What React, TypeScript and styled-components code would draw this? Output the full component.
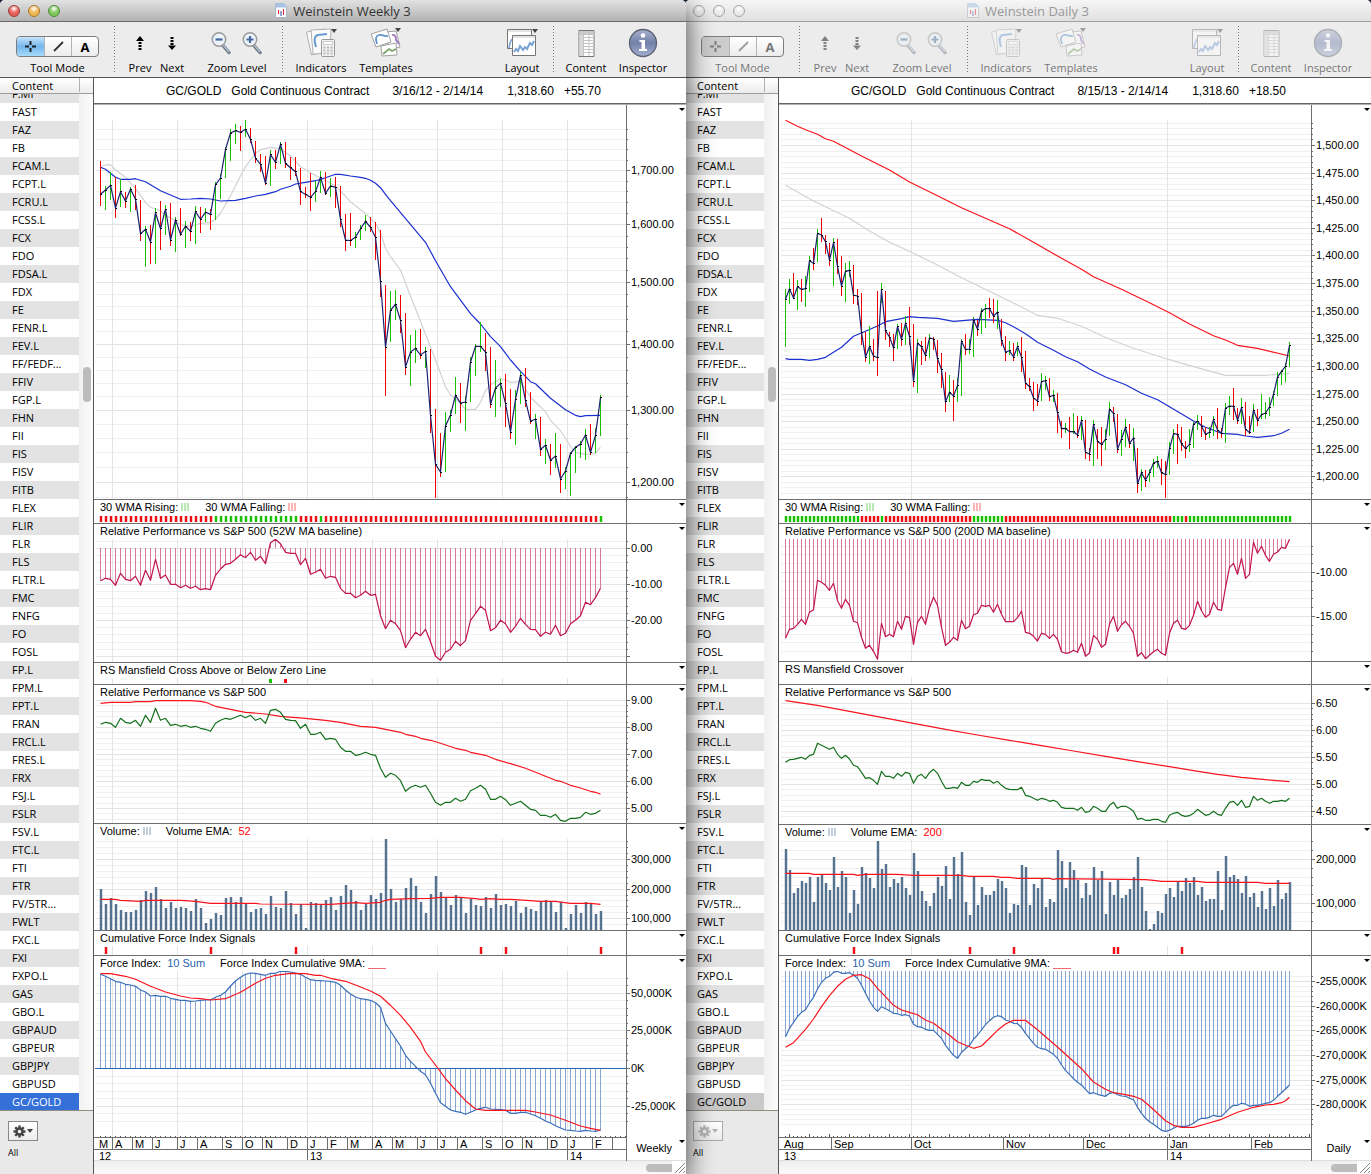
import React from 'react';
import styled, { createGlobalStyle, css } from 'styled-components';

/* ---------- data ---------- */

type Bar = [high: number, low: number, close: number, up: 0 | 1];
type Knot = [index: number, y: number];

const SYMBOLS = `F.MI FAST FAZ FB FCAM.L FCPT.L FCRU.L FCSS.L FCX FDO FDSA.L FDX FE FENR.L FEV.L FF/FEDF... FFIV FGP.L FHN FII FIS FISV FITB FLEX FLIR FLR FLS FLTR.L FMC FNFG FO FOSL FP.L FPM.L FPT.L FRAN FRCL.L FRES.L FRX FSJ.L FSLR FSV.L FTC.L FTI FTR FV/5TR... FWLT FXC.L FXI FXPO.L GAS GBO.L GBPAUD GBPEUR GBPJPY GBPUSD GC/GOLD`.split(' ');

/* Chart samples are stored in thirds of a pixel; each series names the lift that brings it to the top of its plot. */
const WEEKLY_BARS: Bar[] = [
  [183,318,283,0],[258,330,270,1],[216,300,256,1],[232,353,324,0],[238,321,275,1],[277,324,303,0],[262,336,268,1],[255,330,298,0],
  [300,423,401,0],[378,501,388,1],[375,492,426,0],[323,492,338,1],[303,450,386,0],[315,405,327,1],[309,438,420,0],[351,456,360,1],
  [324,407,403,0],[363,444,379,1],[366,423,394,0],[318,432,335,1],[321,399,358,0],[324,366,337,1],[327,390,343,0],[246,360,254,1],
  [222,297,234,1],[142,234,148,1],[86,183,99,1],[71,132,92,1],[78,153,97,0],[60,111,88,1],[84,129,118,0],[123,189,175,0],
  [162,216,192,0],[168,255,250,0],[150,258,164,1],[150,207,187,0],[126,192,133,1],[126,204,190,0],[170,240,203,0],[170,228,215,0],
  [204,315,275,0],[261,294,283,0],[219,333,292,0],[243,306,275,1],[213,279,232,1],[216,285,280,0],[234,291,258,1],[231,324,262,0],
  [258,381,358,0],[342,453,420,0],[339,438,422,0],[396,444,411,1],[375,420,386,1],[345,393,364,1],[350,396,382,0],[366,480,412,0],
  [390,591,545,0],[555,888,742,0],[573,726,631,1],[570,660,613,1],[585,699,661,0],[639,825,801,0],[705,858,756,1],[690,789,745,1],
  [687,777,765,0],[741,804,754,1],[747,999,946,0],[927,1194,1093,0],[999,1131,1116,0],[936,1116,978,1],[930,996,945,1],[831,942,886,1],
  [849,969,909,0],[888,993,906,1],[771,906,786,1],[732,828,739,1],[666,756,739,1],[699,813,756,0],[741,924,913,0],[780,951,864,1],
  [837,921,850,1],[822,981,910,0],[867,1017,996,0],[870,1035,898,1],[816,912,826,1],[804,921,901,0],[876,972,964,0],[942,1017,957,1],
  [951,1068,1048,0],[1017,1092,1036,1],[1032,1125,1081,0],[999,1104,1068,1],[1032,1179,1137,0],[1101,1167,1113,1],[1056,1188,1060,1],
  [1038,1119,1042,1],[1023,1074,1032,1],[987,1080,1005,1],[972,1065,1057,0],[984,1059,1006,1],[885,1008,892,1],
];
const WEEKLY_BLUE: Knot[] = [[0,202],[1,208],[3,232],[4,238],[6,238],[7,236],[9,245],[12,272],[16,298],[18,297],[20,295],[22,297],[24,303],[27,301],[29,295],[31,288],[33,283],[35,275],[36,268],[38,259],[39,252],[41,247],[43,242],[45,233],[47,223],[48,223],[50,228],[52,232],[53,235],[54,241],[55,250],[56,263],[57,283],[58,302],[65,427],[67,482],[70,560],[74,641],[76,672],[78,710],[80,740],[82,780],[84,814],[86,845],[87,851],[90,895],[93,929],[95,946],[96,950],[97,947],[100,946]];
const WEEKLY_GREY: Knot[] = [[0,199],[1,195],[2,194],[3,210],[5,232],[7,266],[9,307],[10,322],[12,333],[13,345],[15,362],[16,374],[18,380],[20,370],[22,368],[23,357],[24,340],[26,287],[28,228],[29,200],[31,160],[32,149],[34,142],[36,146],[38,168],[40,200],[42,218],[44,234],[46,250],[47,258],[48,273],[50,305],[52,329],[53,340],[55,370],[56,398],[57,445],[58,470],[60,510],[62,588],[65,702],[67,780],[68,820],[69,860],[70,885],[72,910],[73,928],[75,928],[76,907],[77,872],[78,855],[80,835],[82,847],[84,844],[85,867],[86,892],[89,935],[90,961],[92,992],[94,1039],[95,1057],[97,1064],[99,1060],[100,1042]];
const WEEKLY_MANSFIELD = [257,250,253,271,235,253,257,244,271,226,256,193,250,240,268,268,278,271,280,274,284,281,284,241,222,208,205,193,179,188,172,196,184,206,143,133,146,172,175,175,209,190,238,232,223,250,244,247,280,295,295,308,301,289,301,298,362,401,376,386,407,458,433,412,422,403,440,484,496,472,463,439,452,437,376,356,334,346,407,398,376,386,412,394,370,388,403,404,424,412,418,391,422,415,386,376,362,322,329,308,280];
const WEEKLY_RS_MA: Knot[] = [[0,55],[2,52],[6,52],[7,50],[10,50],[11,47],[18,47],[20,49],[21,52],[23,64],[26,73],[29,82],[33,87],[36,94],[41,100],[45,106],[48,112],[52,124],[55,127],[58,136],[60,142],[61,148],[63,154],[64,160],[66,166],[68,175],[71,190],[73,196],[74,202],[77,211],[79,223],[82,236],[85,250],[91,286],[92,289],[94,301],[96,309],[98,319],[99,322],[100,328]];
const WEEKLY_RS = [118,112,115,127,100,112,115,106,124,91,112,70,106,100,121,118,124,121,127,124,130,133,139,115,106,100,103,97,91,98,91,106,100,115,76,73,82,103,106,107,130,118,148,148,142,163,160,163,187,199,199,211,208,202,208,211,250,277,265,271,287,319,307,301,307,301,325,352,361,352,352,340,349,343,317,310,301,313,343,343,334,344,361,355,349,361,373,376,391,391,397,388,406,409,400,400,397,382,388,385,376];
const WEEKLY_VOLUME = [613,656,640,656,676,680,680,674,646,619,623,607,643,670,650,670,667,668,677,643,670,713,701,683,689,640,637,652,637,655,680,673,670,686,632,665,668,619,655,686,656,730,652,655,658,646,637,676,634,601,616,647,676,658,631,643,625,463,613,652,643,610,580,604,652,683,628,574,622,640,661,631,640,683,643,661,664,637,670,628,659,656,664,647,685,667,673,677,652,646,652,680,652,730,688,661,685,650,658,688,677];
const WEEKLY_VOLUME_EMA: Knot[] = [[0,643],[3,643],[4,646],[8,649],[9,646],[16,646],[19,649],[22,655],[31,655],[32,657],[46,658],[51,653],[53,655],[56,652],[57,646],[58,643],[62,641],[66,640],[68,637],[72,637],[75,641],[76,643],[78,641],[80,643],[82,643],[86,647],[88,649],[91,649],[94,655],[98,655],[100,658]];
const WEEKLY_FORCE = [73,79,86,94,97,103,105,109,120,126,138,136,139,139,145,148,151,151,154,153,151,150,149,142,136,126,108,93,82,73,69,70,73,76,70,70,64,64,66,69,73,82,89,91,92,93,94,97,106,120,132,141,146,148,151,158,172,220,243,266,288,316,334,349,364,374,400,430,458,469,480,484,487,493,487,480,475,472,477,478,479,481,490,490,487,487,492,497,505,513,519,527,534,540,541,543,544,541,543,544,540];
const WEEKLY_FORCE_MA: Knot[] = [[0,71],[2,71],[5,79],[7,88],[10,109],[13,126],[16,138],[18,144],[20,146],[22,150],[25,146],[28,127],[31,100],[33,85],[35,76],[38,70],[41,71],[43,76],[44,76],[46,85],[49,94],[51,105],[54,123],[56,139],[58,166],[60,196],[62,232],[64,274],[65,306],[67,345],[69,386],[71,420],[73,452],[75,477],[77,481],[85,481],[87,486],[90,495],[93,511],[96,528],[98,535],[100,541]];

const DAILY_BARS: Bar[] = [
  [568,741,597,1],[537,612,567,1],[519,597,594,0],[540,630,560,1],[537,606,568,0],[528,622,566,1],[468,576,482,1],[444,510,490,0],
  [387,486,400,1],[354,426,405,0],[405,462,425,0],[429,498,480,0],[414,558,428,1],[417,522,499,0],[468,588,558,0],[489,606,514,1],
  [483,531,511,1],[495,612,586,0],[567,615,588,0],[579,735,697,0],[696,786,771,0],[678,792,740,1],[717,783,768,0],[573,828,773,0],
  [549,609,569,1],[573,720,692,0],[696,741,711,0],[702,783,743,0],[672,747,680,1],[669,738,718,0],[648,735,670,1],[621,735,709,0],
  [672,861,845,0],[717,879,730,1],[723,795,740,0],[711,783,766,0],[702,774,714,1],[711,750,717,0],[720,819,776,0],[759,864,809,0],
  [816,936,905,0],[825,906,877,1],[840,963,888,0],[834,906,857,1],[717,888,724,1],[702,765,749,0],[717,762,747,1],[651,771,660,1],
  [660,708,687,0],[624,702,633,1],[612,684,626,1],[594,654,626,0],[597,669,648,0],[600,687,637,1],[657,738,720,0],[708,783,756,0],
  [723,765,752,1],[729,783,771,0],[726,768,740,1],[711,816,771,0],[753,867,849,0],[834,873,860,0],[846,933,894,0],[852,918,903,0],
  [819,903,845,1],[828,870,842,1],[834,903,890,0],[870,906,886,1],[879,999,938,0],[963,1014,986,0],[969,999,985,1],[951,1047,995,0],
  [939,1002,995,1],[948,1014,1005,0],[948,1020,962,1],[960,1077,1057,0],[1044,1083,1062,0],[960,1098,973,1],[987,1077,1024,0],
  [981,1098,1033,0],[987,1050,1018,1],[906,1008,928,1],[921,966,940,0],[942,1059,1047,0],[990,1068,1017,1],[957,1041,982,1],
  [972,1044,1030,0],[984,1083,1014,1],[1044,1179,1151,0],[1107,1173,1118,1],[1110,1161,1140,0],[1107,1146,1118,1],[1077,1131,1089,1],
  [1068,1104,1084,1],[1077,1155,1118,0],[1083,1194,1123,0],[1026,1125,1046,1],[987,1062,1001,1],[972,1092,1003,0],[981,1053,1031,0],
  [1023,1074,1046,0],[987,1056,1033,1],[966,1044,973,1],[945,990,963,1],[948,1011,978,0],[981,1020,1003,0],[981,1014,997,1],
  [948,1008,959,1],[924,1017,990,0],[984,1014,1000,0],[909,1029,925,1],[888,945,918,1],[864,960,919,0],[924,972,961,0],[894,972,923,1],
  [906,1008,988,0],[948,1002,998,0],[912,996,931,1],[927,978,961,0],[882,957,944,1],[906,957,939,1],[891,948,921,1],[873,918,883,1],
  [816,888,831,1],[810,855,814,1],[789,846,799,1],[726,801,736,1],
];
const DAILY_RED: Knot[] = [[0,61],[3,79],[5,89],[8,103],[10,116],[12,124],[19,168],[26,210],[31,246],[38,287],[44,323],[50,355],[56,386],[62,427],[68,468],[74,508],[77,530],[84,568],[91,608],[96,638],[101,672],[107,707],[110,720],[113,736],[118,745],[126,768]];
const DAILY_GREY: Knot[] = [[0,256],[7,303],[16,355],[21,393],[26,427],[31,454],[38,495],[44,533],[52,580],[58,615],[63,646],[68,655],[74,679],[81,718],[87,745],[96,779],[102,800],[110,826],[120,826],[126,820]];
const DAILY_BLUE: Knot[] = [[0,776],[1,778],[4,778],[6,781],[8,778],[10,772],[12,757],[14,742],[17,709],[20,694],[23,678],[25,665],[29,656],[31,650],[33,652],[38,655],[42,664],[45,661],[48,658],[53,661],[55,668],[57,680],[60,701],[63,727],[67,751],[70,770],[73,785],[76,807],[80,831],[85,854],[89,880],[93,899],[96,920],[102,963],[105,982],[109,1000],[113,1003],[115,1008],[118,1012],[122,1007],[124,1000],[126,988]];
const DAILY_MANSFIELD = [430,403,400,388,373,388,352,344,256,262,271,286,265,317,340,313,331,379,383,427,460,451,469,493,385,425,418,425,379,403,364,367,448,382,364,388,338,307,331,397,451,442,427,436,376,401,394,359,355,331,334,331,352,328,358,380,380,380,368,349,412,415,424,438,415,418,430,418,433,470,475,473,466,472,445,484,474,421,433,457,448,388,364,409,389,379,394,415,484,473,491,481,470,463,475,481,415,385,376,400,403,391,361,319,347,367,358,322,343,346,278,217,205,238,190,250,238,142,175,154,181,199,178,171,157,160,133];
const DAILY_RS_MA: Knot[] = [[0,617],[8,631],[16,649],[24,667],[32,685],[40,703],[48,720],[56,736],[64,752],[72,768],[80,784],[88,800],[96,815],[102,827],[108,838],[114,847],[120,854],[126,860]];
const DAILY_RS = [802,794,793,790,787,793,781,778,745,751,757,763,757,778,790,781,792,811,815,832,850,848,856,868,829,844,844,850,835,844,832,835,865,844,838,850,833,823,835,859,880,880,877,880,862,871,871,859,862,853,856,856,865,859,871,880,883,884,884,877,901,904,910,916,910,913,919,916,922,937,940,940,940,946,937,952,949,934,940,949,949,931,922,940,934,934,940,949,973,970,976,976,973,973,979,982,961,955,952,961,964,962,955,943,952,961,958,949,958,961,940,922,919,931,916,937,934,904,916,910,919,925,919,919,916,919,910];
const DAILY_VOLUME = [86,149,220,203,184,188,170,247,170,164,188,209,112,200,152,170,278,209,251,140,158,175,203,62,146,131,200,178,190,172,205,224,100,152,212,242,257,220,172,197,137,238,112,163,97,245,284,172,254,200,224,226,214,176,182,203,278,251,254,134,142,254,191,205,173,260,236,245,89,122,205,125,149,179,233,190,226,142,179,152,281,187,224,179,233,224,206,172,110,200,272,326,311,272,278,221,203,230,182,214,175,190,170,226,200,244,236,236,152,269,107,170,164,178,218,167,230,218,260,214,266,203,257,179,236,218,185];
const DAILY_VOLUME_EMA: Knot[] = [[0,160],[6,160],[7,163],[17,163],[18,166],[20,163],[28,163],[32,166],[44,166],[46,169],[52,169],[54,172],[56,172],[58,175],[66,175],[67,178],[68,176],[90,179],[92,181],[94,184],[103,184],[105,187],[118,187],[120,190],[126,190]];
const DAILY_FORCE = [650,625,607,590,577,569,549,532,507,487,475,469,457,454,460,460,458,466,475,496,520,543,562,574,560,566,572,580,581,586,584,588,613,620,622,628,631,631,643,655,676,691,706,715,697,686,676,658,645,630,614,602,592,587,590,600,604,610,611,622,640,655,670,682,686,688,695,703,715,735,751,763,776,787,795,808,821,818,823,826,829,820,817,824,828,829,835,839,862,880,895,905,913,922,931,934,931,925,919,919,919,916,910,901,895,895,892,886,889,889,877,865,856,856,850,852,859,856,856,853,850,848,841,829,818,807,795];
const DAILY_FORCE_MA: Knot[] = [[0,682],[2,668],[5,628],[7,597],[9,560],[11,527],[13,499],[15,478],[17,466],[19,464],[21,476],[23,505],[25,530],[27,556],[29,570],[31,577],[33,584],[35,600],[37,610],[39,628],[41,646],[43,665],[45,676],[47,685],[49,678],[51,655],[53,631],[55,612],[57,601],[60,601],[63,629],[65,650],[68,681],[70,703],[74,746],[77,786],[80,808],[82,818],[85,824],[87,829],[89,838],[91,858],[93,880],[95,902],[97,916],[99,922],[102,922],[105,912],[109,898],[113,877],[117,862],[120,855],[122,853],[124,848],[125,842],[126,832]];

const range = (a: number, b: number) => Array.from({ length: b - a + 1 }, (_, i) => a + i);

/* ---------- chart model ---------- */

type Layer =
  | { kind: 'bars'; data: Bar[]; lift: number }
  | { kind: 'line'; data: number[] | Knot[]; lift: number; color: string; width?: number }
  | { kind: 'stems'; data: number[]; lift: number; color: string; base: number; width?: number }
  | { kind: 'marks'; at: number[]; color: string; top: number; bottom: number; width?: number }
  | { kind: 'rule'; y: number; color: string }
  | { kind: 'ticks' };

interface Scale {
  y: (v: number) => number;
  from: number;
  to: number;
  step: number;
  every: number;
  labels: number[];
  format: (v: number) => string;
}

interface PanelSpec {
  title?: React.ReactNode;
  height: number;
  scale?: Scale;
  layers: Layer[];
}

interface Book {
  title: string;
  active: boolean;
  quote: string[];
  period: string;
  step: number;
  verticals: number[];
  months: { names: string[]; stops: number[] };
  years: { names: string[]; stops: number[] };
  panels: PanelSpec[];
}

const money = (v: number) => v.toLocaleString('en-US', { minimumFractionDigits: 2, maximumFractionDigits: 2 });
const whole = (v: number) => v.toLocaleString('en-US');
const thousandsK = (v: number) => (v === 0 ? '0K' : `${whole(v * 1000)}K`);

const GREEN = '#17c300';
const RED = '#f20d12';
const PLOT_WIDTH = 532;
const TITLE_HEIGHT = 15;

/* ---------- shared styles ---------- */

const uiFont = css`
  font-family: 'Open Sans', 'Noto Sans', sans-serif;
`;
const chartFont = css`
  font-family: 'Liberation Sans', Arial, sans-serif;
`;

const GlobalStyle = createGlobalStyle`
  *, *::before, *::after { box-sizing: border-box; }
  body { margin: 0; background: #1d2a3c; color: #000; }
  button { margin: 0; padding: 0; border: 0; background: none; color: inherit; font: inherit; }
`;

const Desktop = styled.div`
  display: grid;
  grid-template-columns: 686fr 685fr;
  min-height: 100vh;
`;

const WindowFrame = styled.section<{ $active: boolean }>`
  ${uiFont}
  display: flex;
  flex-direction: column;
  min-width: 0;
  background: #fff;
  border-radius: 5px 5px 0 0;
  ${(p) =>
    p.$active
      ? css`
          position: relative;
          z-index: 1;
          box-shadow: 0 8px 28px rgba(0, 0, 0, 0.75);
        `
      : css`
          margin-left: -1px;
        `}
`;

const TitleBar = styled.header<{ $active: boolean }>`
  display: grid;
  grid-template-columns: 1fr auto 1fr;
  align-items: center;
  height: 22px;
  padding: 0 2px 0 8px;
  border-bottom: 1px solid ${(p) => (p.$active ? '#6b6b6b' : '#a0a0a0')};
  border-radius: 5px 5px 0 0;
  background: ${(p) => (p.$active ? 'linear-gradient(#e2e2e2, #b2b2b2)' : 'linear-gradient(#f6f6f6, #e0e0e0)')};
  color: ${(p) => (p.$active ? '#333' : '#999')};
`;

const Lights = styled.div`
  display: flex;
  gap: 8px;
`;

const Light = styled.button<{ $color: string; $rim: string }>`
  width: 12px;
  height: 12px;
  border: 1px solid ${(p) => p.$rim};
  border-radius: 50%;
  background: radial-gradient(circle at 50% 25%, #fff 0, ${(p) => p.$color} 50%, ${(p) => p.$color} 100%);
`;

const Title = styled.h1`
  display: flex;
  align-items: center;
  gap: 6px;
  margin: 0 6px 0 0;
  font-size: 13px;
  line-height: 20px;
  font-weight: 400;
`;

const Toolbar = styled.div<{ $active: boolean }>`
  display: flex;
  height: 56px;
  padding: 4px 17px 0 16px;
  border-bottom: 1px solid #555;
  background: #ececec;
  color: ${(p) => (p.$active ? '#000' : '#777')};
  svg {
    opacity: ${(p) => (p.$active ? 1 : 0.45)};
  }
`;

const ToolGroup = styled.div<{ $width: number; $before?: number }>`
  display: grid;
  grid-template-rows: 34px 16px;
  justify-items: center;
  align-items: center;
  width: ${(p) => p.$width}px;
  margin-left: ${(p) => p.$before ?? 0}px;
  font-size: 11px;
  line-height: 16px;
  white-space: nowrap;
`;

const IconRow = styled.div`
  display: flex;
  gap: 8px;
`;

const IconButton = styled.button`
  display: flex;
`;

const Divider = styled.div<{ $before: number }>`
  width: 1px;
  height: 48px;
  margin-left: ${(p) => p.$before}px;
  background: repeating-linear-gradient(#777 0 1px, transparent 1px 3px);
`;

const Spacer = styled.div`
  flex: 1;
`;

const Segments = styled.div`
  display: grid;
  grid-template-columns: repeat(3, 1fr);
  width: 83px;
  height: 21px;
  margin-top: 7px;
  border: 1px solid #7d7d7d;
  border-radius: 4px;
  overflow: hidden;
  background: linear-gradient(#fff, #ececec);
`;

const Segment = styled.button<{ $fill?: string }>`
  display: flex;
  align-items: center;
  justify-content: center;
  background: ${(p) => p.$fill ?? 'none'};
  & + & {
    border-left: 1px solid #b5b5b5;
  }
`;

const WindowBody = styled.div`
  display: grid;
  grid-template-columns: 94px minmax(0, 1fr);
  flex: 1;
`;

const Sidebar = styled.aside`
  display: flex;
  flex-direction: column;
  border-right: 1px solid #555;
  background: #e9e9e9;
  font-size: 11px;
`;

const SidebarHead = styled.div`
  display: flex;
  height: 16px;
  padding-left: 12px;
  border-bottom: 1px solid #9d9d9d;
  background: linear-gradient(#fff, #ececec);
  line-height: 16px;
  span {
    width: 68px;
    margin-bottom: 1px;
    border-right: 1px solid #b0b0b0;
  }
`;

const ListArea = styled.div`
  display: grid;
  grid-template-columns: 79px 1fr;
  overflow: hidden;
  border-bottom: 1px solid #8d8d80;
  background: #fff;
`;

const SymbolList = styled.ul`
  margin: -9px 0 -1px;
  padding: 0;
  list-style: none;
`;

const SymbolRow = styled.button<{ $state: 'plain' | 'active' | 'inactive' }>`
  display: block;
  width: 100%;
  height: 18px;
  padding-left: 12px;
  text-align: left;
  line-height: 18px;
  white-space: nowrap;
  li:nth-child(odd) > & {
    background: #e3e3e3;
  }
  ${(p) =>
    p.$state !== 'plain' &&
    css`
      && {
        color: ${p.$state === 'active' ? '#fff' : '#000'};
        background: ${p.$state === 'active' ? '#3470d8' : '#c9c9c9'} !important;
      }
    `}
`;

const ScrollTrack = styled.div`
  display: flex;
  justify-content: center;
  padding-top: 273px;
  padding-left: 1px;
  background: linear-gradient(90deg, #f1f1f1, #fbfbfb);
`;

const ScrollThumb = styled.div`
  width: 8px;
  height: 35px;
  border-radius: 4px;
  background: #bcbcbc;
`;

const SidebarFoot = styled.div`
  flex: 1;
  padding: 10px 8px;
  font-size: 9px;
  line-height: 12px;
`;

const GearButton = styled.button<{ $active: boolean }>`
  display: flex;
  align-items: center;
  justify-content: center;
  gap: 1px;
  width: 30px;
  height: 20px;
  margin-bottom: 6px;
  border: 1px solid ${(p) => (p.$active ? '#888' : '#aaa')};
  background: linear-gradient(#fff, #ececec);
  color: ${(p) => (p.$active ? '#444' : '#b5b5b5')};
`;

const Main = styled.main`
  ${chartFont}
  display: flex;
  flex-direction: column;
  min-width: 0;
  background: #fff;
`;

const QuoteBar = styled.div`
  display: flex;
  height: 27px;
  padding-left: 72px;
  border-bottom: 1px solid #b0b0b0;
  box-shadow: inset 0 -1px #666;
  font-size: 12px;
  line-height: 26px;
  white-space: pre;
`;

const QuoteField = styled.span<{ $before: number }>`
  margin-left: ${(p) => p.$before}px;
`;

const PanelRow = styled.section`
  display: grid;
  grid-template-columns: minmax(0, 1fr) 60px;
  & + & {
    border-top: 1px solid #6e6e6e;
  }
`;

const PanelTitle = styled.h2`
  display: flex;
  height: ${TITLE_HEIGHT}px;
  margin: 0;
  padding-left: 6px;
  font-size: 11px;
  line-height: 15px;
  font-weight: 400;
  white-space: pre;
`;

const PlotSvg = styled.svg`
  display: block;
  width: 100%;
  * {
    vector-effect: non-scaling-stroke;
  }
`;

const AxisColumn = styled.div`
  position: relative;
  border-left: 1px solid #6e6e6e;
`;

const AxisSvg = styled.svg`
  display: block;
  overflow: visible;
  font-size: 11px;
`;

const MenuButton = styled.button`
  position: absolute;
  top: 3px;
  right: 1px;
  border: solid transparent;
  border-width: 3px 3px 0;
  border-top-color: #000;
`;

const TimeAxis = styled.div`
  display: grid;
  grid-template-columns: minmax(0, 1fr) 60px;
  height: 23px;
  font-size: 11px;
`;

const TimeRow = styled.div<{ $stops: number[] }>`
  display: grid;
  grid-template-columns: ${(p) =>
    p.$stops
      .slice(1)
      .map((s, i) => `minmax(0, ${s - p.$stops[i]}fr)`)
      .join(' ')};
  height: 12px;
  border-top: 1px solid #6e6e6e;
  line-height: 13px;
`;

const TimeCell = styled.span`
  height: 11px;
  padding-left: 2px;
  & + & {
    border-left: 1px solid #6e6e6e;
  }
  &:first-child {
    padding-left: 5px;
  }
`;

const PeriodCell = styled.div`
  position: relative;
  padding-right: 14px;
  border-left: 1px solid #6e6e6e;
  text-align: right;
  line-height: 23px;
`;

const PeriodName = styled.span<{ $inset: number }>`
  padding-right: ${(p) => p.$inset}px;
`;

const BottomStrip = styled.div`
  display: flex;
  align-items: center;
  justify-content: flex-end;
  height: 14px;
  border-top: 1px solid #ddd;
  background: linear-gradient(#efefef, #fafafa);
`;

const BottomThumb = styled.div`
  width: 26px;
  height: 8px;
  border-radius: 4px 0 0 4px;
  background: #bdbdbd;
`;

const Swatch = styled.span<{ $color: string; $after?: number }>`
  width: 8px;
  height: 8px;
  margin: 3px ${(p) => p.$after ?? 0}px 0 3px;
  background: repeating-linear-gradient(90deg, ${(p) => p.$color} 0 2px, transparent 2px 3px);
`;

const Underscore = styled.span`
  width: 18px;
  height: 13px;
  margin-left: 3px;
  border-bottom: 1px solid #f26a74;
`;

const Param = styled.span<{ $color: string; $after?: number }>`
  margin-left: 6px;
  margin-right: ${(p) => p.$after ?? 0}px;
  color: ${(p) => p.$color};
`;

/* ---------- panels ---------- */

const wmaTitle = (
  <>
    30 WMA Rising:
    <Swatch $color="#b9e8b4" $after={16} />
    30 WMA Falling:
    <Swatch $color="#f8b3b3" />
  </>
);
const volumeTitle = (ema: string) => (
  <>
    Volume:
    <Swatch $color="#c3cfdc" $after={15} />
    Volume EMA:
    <Param $color="#f00">{ema}</Param>
  </>
);
const forceTitle = (
  <>
    Force Index:
    <Param $color="#2a62b0" $after={15}>
      10 Sum
    </Param>
    Force Index Cumulative 9MA:
    <Underscore />
  </>
);

const weeklyRising = [...range(23, 39), 44, 100];
const dailyRising = [...range(0, 18), 24, ...range(47, 54), ...range(97, 99), ...range(101, 126)];
const rest = (n: number, taken: number[]) => range(0, n).filter((i) => !taken.includes(i));

const BOOKS: Book[] = [
  {
    title: 'Weinstein Weekly 3',
    active: true,
    quote: ['GC/GOLD', 'Gold Continuous Contract', '3/16/12 - 2/14/14', '1,318.60', '+55.70'],
    period: 'Weekly',
    step: 5,
    verticals: range(0, 7).map((i) => 18 + 65 * i),
    months: {
      names: 'M A M J J A S O N D J F M A M J J A S O N D J F'.split(' ').concat(''),
      stops: [0, 18, 38, 58, 83, 103, 128, 148, 168, 193, 213, 233, 253, 278, 298, 323, 343, 363, 388, 408, 428, 453, 473, 498, 518, 532],
    },
    years: { names: ['12', '13', '14'], stops: [0, 213, 473, 532] },
    panels: [
      {
        height: 394,
        scale: { y: (v) => 50.5 + 895 * Math.log(1700 / v), from: 1180, to: 1780, step: 20, every: 100, labels: [1700, 1600, 1500, 1400, 1300, 1200], format: money },
        layers: [
          { kind: 'line', data: WEEKLY_GREY, lift: 20, color: '#d2d2d2', width: 1.2 },
          { kind: 'line', data: WEEKLY_BLUE, lift: 20, color: '#1a2fd0', width: 1.2 },
          { kind: 'bars', data: WEEKLY_BARS, lift: 20 },
        ],
      },
      {
        title: wmaTitle,
        height: 23,
        layers: [
          { kind: 'marks', at: weeklyRising, color: GREEN, top: 1, bottom: 7 },
          { kind: 'marks', at: rest(100, weeklyRising), color: RED, top: 1, bottom: 7 },
        ],
      },
      {
        title: 'Relative Performance vs S&P 500 (52W MA baseline)',
        height: 138,
        scale: { y: (v) => 9.5 - 3.6 * v, from: -30, to: 2, step: 2, every: 10, labels: [0, -10, -20], format: money },
        layers: [
          { kind: 'stems', data: WEEKLY_MANSFIELD, lift: 44, color: '#da7a9b', base: 9 },
          { kind: 'line', data: WEEKLY_MANSFIELD, lift: 44, color: '#c0134f', width: 1.2 },
        ],
      },
      {
        title: 'RS Mansfield Cross Above or Below Zero Line',
        height: 21,
        layers: [
          { kind: 'marks', at: [34], color: GREEN, top: 1, bottom: 5, width: 3 },
          { kind: 'marks', at: [37], color: RED, top: 1, bottom: 5, width: 3 },
        ],
      },
      {
        title: 'Relative Performance vs S&P 500',
        height: 138,
        scale: { y: (v) => 0.5 + 27 * (9 - v), from: 4.6, to: 9, step: 0.2, every: 1, labels: [9, 8, 7, 6, 5], format: money },
        layers: [
          { kind: 'line', data: WEEKLY_RS_MA, lift: 15, color: '#f8141c', width: 1.2 },
          { kind: 'line', data: WEEKLY_RS, lift: 15, color: '#14701c', width: 1.2 },
        ],
      },
      {
        title: volumeTitle('52'),
        height: 106,
        scale: { y: (v) => 20.5 + 0.296 * (300 - v), from: 80, to: 360, step: 20, every: 100, labels: [300, 200, 100], format: (v) => whole(v * 1000) },
        layers: [
          { kind: 'stems', data: WEEKLY_VOLUME, lift: 154, color: '#55738f', base: 91, width: 2 },
          { kind: 'line', data: WEEKLY_VOLUME_EMA, lift: 154, color: '#f8141c', width: 1.2 },
        ],
      },
      {
        title: 'Cumulative Force Index Signals',
        height: 24,
        layers: [{ kind: 'marks', at: [1, 22, 39, 76, 81, 100], color: RED, top: 1, bottom: 8 }],
      },
      {
        title: forceTitle,
        height: 181,
        scale: { y: (v) => 97.5 - 1.504 * v, from: -35, to: 60, step: 5, every: 25, labels: [50, 25, 0, -25], format: thousandsK },
        layers: [
          { kind: 'stems', data: WEEKLY_FORCE, lift: 21, color: '#86a6d4', base: 97 },
          { kind: 'rule', y: 97.5, color: '#2b66ae' },
          { kind: 'line', data: WEEKLY_FORCE, lift: 21, color: '#3a6fb8', width: 1.2 },
          { kind: 'line', data: WEEKLY_FORCE_MA, lift: 21, color: '#f8141c', width: 1.2 },
          { kind: 'ticks' },
        ],
      },
    ],
  },
  {
    title: 'Weinstein Daily 3',
    active: false,
    quote: ['GC/GOLD', 'Gold Continuous Contract', '8/15/13 - 2/14/14', '1,318.60', '+18.50'],
    period: 'Daily',
    step: 4,
    verticals: [132, 388],
    months: { names: ['Aug', 'Sep', 'Oct', 'Nov', 'Dec', 'Jan', 'Feb'], stops: [0, 52, 132, 224, 304, 388, 472, 532] },
    years: { names: ['13', '14'], stops: [0, 388, 532] },
    panels: [
      {
        height: 394,
        scale: { y: (v) => 25.5 + 1.1045 * (1500 - v), from: 1185, to: 1520, step: 5, every: 25, labels: range(0, 12).map((i) => 1500 - 25 * i), format: money },
        layers: [
          { kind: 'line', data: DAILY_RED, lift: 20, color: '#f8141c', width: 1.2 },
          { kind: 'line', data: DAILY_GREY, lift: 20, color: '#d2d2d2', width: 1.2 },
          { kind: 'line', data: DAILY_BLUE, lift: 20, color: '#1a2fd0', width: 1.2 },
          { kind: 'bars', data: DAILY_BARS, lift: 20 },
        ],
      },
      {
        title: wmaTitle,
        height: 23,
        layers: [
          { kind: 'marks', at: dailyRising, color: GREEN, top: 1, bottom: 7 },
          { kind: 'marks', at: rest(126, dailyRising), color: RED, top: 1, bottom: 7 },
        ],
      },
      {
        title: 'Relative Performance vs S&P 500 (200D MA baseline)',
        height: 137,
        scale: { y: (v) => 33.5 - 8.8 * (v + 10), from: -19, to: -7, step: 1, every: 5, labels: [-10, -15], format: money },
        layers: [
          { kind: 'stems', data: DAILY_MANSFIELD, lift: 44, color: '#da7a9b', base: 0 },
          { kind: 'line', data: DAILY_MANSFIELD, lift: 44, color: '#c0134f', width: 1.2 },
        ],
      },
      { title: 'RS Mansfield Crossover', height: 22, layers: [] },
      {
        title: 'Relative Performance vs S&P 500',
        height: 139,
        scale: { y: (v) => 3.5 + 54 * (6.5 - v), from: 4.4, to: 6.5, step: 0.1, every: 0.5, labels: [6.5, 6, 5.5, 5, 4.5], format: money },
        layers: [
          { kind: 'line', data: DAILY_RS_MA, lift: 205, color: '#f8141c', width: 1.2 },
          { kind: 'line', data: DAILY_RS, lift: 205, color: '#14701c', width: 1.2 },
        ],
      },
      {
        title: volumeTitle('200'),
        height: 105,
        scale: { y: (v) => 19.5 + 0.44 * (200 - v), from: 60, to: 240, step: 20, every: 100, labels: [200, 100], format: (v) => whole(v * 1000) },
        layers: [
          { kind: 'stems', data: DAILY_VOLUME, lift: 20, color: '#55738f', base: 90, width: 2 },
          { kind: 'line', data: DAILY_VOLUME_EMA, lift: 20, color: '#f8141c', width: 1.2 },
        ],
      },
      {
        title: 'Cumulative Force Index Signals',
        height: 24,
        layers: [{ kind: 'marks', at: [17, 46, 57, 82, 83, 99], color: RED, top: 1, bottom: 8 }],
      },
      {
        title: forceTitle,
        height: 181,
        scale: { y: (v) => 10.5 - 4.93 * (v + 255), from: -284, to: -254, step: 1, every: 5, labels: [-255, -260, -265, -270, -275, -280], format: thousandsK },
        layers: [
          { kind: 'stems', data: DAILY_FORCE, lift: 151, color: '#86a6d4', base: 0 },
          { kind: 'line', data: DAILY_FORCE, lift: 151, color: '#3a6fb8', width: 1.2 },
          { kind: 'line', data: DAILY_FORCE_MA, lift: 151, color: '#f8141c', width: 1.2 },
          { kind: 'ticks' },
        ],
      },
    ],
  },
];

/* ---------- chart drawing ---------- */

function levels(scale: Scale) {
  const count = Math.round((scale.to - scale.from) / scale.step);
  return range(0, count).map((i) => {
    const v = scale.from + i * scale.step;
    const ratio = v / scale.every;
    return { y: Math.floor(scale.y(v)) + 0.5, major: Math.abs(ratio - Math.round(ratio)) < 0.01 };
  });
}

/* A solid core with a faint wider edge on both sides. */
function SoftStroke({ d, color, width }: { d: string; color: string; width: number }) {
  return (
    <>
      <path d={d} stroke={color} strokeWidth={width + 2} opacity={0.22} shapeRendering="crispEdges" />
      <path d={d} stroke={color} strokeWidth={width} shapeRendering="crispEdges" />
    </>
  );
}

function LayerView({ layer, step, height }: { layer: Layer; step: number; height: number }) {
  const x = (i: number) => 6.5 + step * i;
  switch (layer.kind) {
    case 'line': {
      const pts = layer.data.map((d, i) =>
        Array.isArray(d) ? `${x(d[0])},${(d[1] / 3 - layer.lift).toFixed(1)}` : `${x(i)},${(d / 3 - layer.lift).toFixed(1)}`,
      );
      return <polyline points={pts.join(' ')} fill="none" stroke={layer.color} strokeWidth={layer.width ?? 1.3} strokeLinejoin="round" />;
    }
    case 'bars': {
      const y = (v: number) => v / 3 - layer.lift;
      const path = (up: number) =>
        layer.data
          .map((b, i) => (b[3] === up ? `M${x(i)} ${Math.round(y(b[0]))}V${Math.round(y(b[1]))}` : ''))
          .join('');
      return (
        <>
          <path d={path(1)} stroke={GREEN} shapeRendering="crispEdges" />
          <path d={path(0)} stroke="#f00000" shapeRendering="crispEdges" />
          <polyline points={layer.data.map((b, i) => `${x(i)},${y(b[2]).toFixed(1)}`).join(' ')} fill="none" stroke="#1c2170" strokeWidth={1.2} />
          <path d={layer.data.map((b, i) => `M${x(i) - 0.5} ${Math.floor(y(b[2])) + 0.5}h2`).join('')} stroke="#000" shapeRendering="crispEdges" />
        </>
      );
    }
    case 'stems': {
      const wide = layer.width === 2;
      const d = layer.data
        .map((v, i) => `M${x(i) + (wide ? 0.5 : 0)} ${layer.base}V${Math.round(v / 3 - layer.lift)}`)
        .join('');
      return wide ? (
        <SoftStroke d={d} color={layer.color} width={2} />
      ) : (
        <path d={d} stroke={layer.color} shapeRendering="crispEdges" />
      );
    }
    case 'marks': {
      const width = layer.width ?? 2;
      const shift = width === 3 ? 0 : 0.5;
      const d = layer.at.map((i) => `M${x(i) + shift} ${layer.top}V${layer.bottom}`).join('');
      return width === 3 ? (
        <path d={d} stroke={layer.color} strokeWidth={3} shapeRendering="crispEdges" />
      ) : (
        <SoftStroke d={d} color={layer.color} width={width} />
      );
    }
    case 'rule':
      return <path d={`M1 ${layer.y}H${PLOT_WIDTH}`} stroke={layer.color} shapeRendering="crispEdges" />;
    case 'ticks': {
      const count = Math.floor((PLOT_WIDTH - 7) / step);
      const d = range(0, count)
        .map((i) => `M${x(i)} ${height}v${step === 4 && i % 5 === 1 ? -3 : -1}`)
        .join('');
      return <path d={d} stroke="#555" shapeRendering="crispEdges" />;
    }
  }
}

function Panel({ spec, book }: { spec: PanelSpec; book: Book }) {
  const h = spec.height - TITLE_HEIGHT;
  const lines = spec.scale ? levels(spec.scale) : [];
  const rows = (major: boolean) => lines.filter((l) => l.major === major && l.y >= 0 && l.y <= h);
  return (
    <PanelRow>
      <div>
        <PanelTitle>{spec.title}</PanelTitle>
        <PlotSvg viewBox={`0 0 ${PLOT_WIDTH} ${h}`} height={h} preserveAspectRatio="none" aria-hidden="true">
          <g shapeRendering="crispEdges">
            <path d={rows(false).map((l) => `M2 ${l.y}H${PLOT_WIDTH}`).join('')} stroke="#f0f0f0" />
            <path d={rows(true).map((l) => `M2 ${l.y}H${PLOT_WIDTH}`).join('')} stroke="#e4e4e4" />
            <path d={book.verticals.map((v) => `M${v + 0.5} 0V${h}`).join('')} stroke="#e4e4e4" />
          </g>
          {spec.layers.map((layer, i) => (
            <LayerView key={i} layer={layer} step={book.step} height={h} />
          ))}
        </PlotSvg>
      </div>
      <AxisColumn>
        <AxisSvg width="59" height={spec.height}>
          <g transform={`translate(0 ${TITLE_HEIGHT})`}>
            <path
              d={rows(false).map((l) => `M0 ${l.y}h1`).join('') + rows(true).map((l) => `M0 ${l.y}h3`).join('')}
              stroke="#6e6e6e"
              shapeRendering="crispEdges"
            />
            {spec.scale?.labels.map((v) => (
              <text key={v} x="4" y={Math.floor(spec.scale!.y(v)) + 4}>
                {spec.scale!.format(v)}
              </text>
            ))}
          </g>
        </AxisSvg>
        <MenuButton aria-label="Panel menu" />
      </AxisColumn>
    </PanelRow>
  );
}

/* ---------- icons ---------- */

const DocIcon = ({ dim }: { dim: boolean }) => (
  <svg width="12" height="15" viewBox="0 0 12 15" opacity={dim ? 0.5 : 1} aria-hidden="true">
    <path d="M.5.5h8l3 3v11H.5z" fill="#fff" stroke="#a9b4c4" />
    <path d="M.5.5h8l3 3v1H.5z" fill="#a8c3e6" />
    <path d="M3.5 7v4M8.5 6v6" stroke="#e0304a" strokeWidth="1.2" />
    <path d="M6 8v5" stroke="#4468b0" strokeWidth="1.2" />
  </svg>
);

const DownArrow = ({ x, y }: { x: number; y: number }) => <path d={`M${x} ${y}h6l-3 4z`} fill="#444" />;

const PrevIcon = () => (
  <svg width="14" height="20" viewBox="0 0 14 20">
    <path d="M3 8 7 3l4 5z" />
    <path d="M5.5 9h3v2h-3zM5.5 12h3v2h-3zM5.5 15h3v2h-3z" />
  </svg>
);
const NextIcon = () => (
  <svg width="14" height="20" viewBox="0 0 14 20">
    <path d="M3 12.500 7 17l4-4.500z" />
    <path d="M5.500 4h3v2h-3zM5.500 7h3v2h-3zM5.500 10h3v2h-3z" />
  </svg>
);

const ZoomIcon = ({ plus }: { plus?: boolean }) => (
  <svg width="23" height="26" viewBox="0 0 23 26">
    <path d="m12.500 15 6.500 7.500" stroke="#6a7683" strokeWidth="3.400" strokeLinecap="round" />
    <path d="m13 15 6 7" stroke="#b6c3d2" strokeWidth="1.300" />
    <circle cx="9" cy="9.500" r="6.700" fill="#eef4fb" stroke="#9a9a9a" strokeWidth="1.500" />
    <path d={plus ? 'M5.500 9.500h7M9 6v7' : 'M5.500 9.500h7'} stroke="#44689c" strokeWidth="2.200" />
  </svg>
);

const IndicatorsIcon = () => (
  <svg width="32" height="32" viewBox="0 0 32 32">
    <g stroke="#b0b0b0" fill="#fbfbfb">
      <path d="m1.500 5 18-3 4 22-17 4z" />
      <path d="m6 3 20-1-1 24-17 1z" />
    </g>
    <path d="M11 20c-2-7-2-11 2-12l9-1" fill="none" stroke="#6a9bd0" strokeWidth="2" />
    <rect x="16.500" y="12.500" width="13" height="17" rx="1" fill="#f0f0f0" stroke="#999" />
    <path d="M18.500 14.500h9v3h-9z" fill="#fff" stroke="#c0c0c0" strokeWidth=".8" />
    <path d="M18.500 20.500h9.500M18.500 23.500h9.500M18.500 26.500h9.500" stroke="#bbb" strokeWidth="2" strokeDasharray="2 1.500" />
    <DownArrow x={26} y={2} />
  </svg>
);

const TemplatesIcon = () => (
  <svg width="32" height="32" viewBox="0 0 32 32">
    <g fill="#fff" stroke="#a0a0a0">
      <path d="m16 5 10-1 4 16-11 2z" />
      <path d="m11 19 15-3 1 12-15 1z" />
      <path d="m1 7 16-5 4 13-15 5z" />
    </g>
    <path d="M7 17C5 11 6 9 9 8s5 2 9 1" fill="none" stroke="#5f93cf" strokeWidth="1.800" />
    <path d="M22 8c3-1 4 2 4 5l3 4" fill="none" stroke="#9a72bd" strokeWidth="1.800" />
    <path d="m13 27 6-5 3 2 4-2" fill="none" stroke="#7da468" strokeWidth="1.800" />
    <DownArrow x={25} y={1} />
  </svg>
);

const LayoutIcon = () => (
  <svg width="32" height="32" viewBox="0 0 32 32">
    <path d="M1.500 2.500h24v19h-24z" fill="#fff" stroke="#777" />
    <path d="M2 3h23v2H2z" fill="#e4e4e4" />
    <path d="m3 21 1-5 2-4" fill="none" stroke="#7aa3d4" strokeWidth="1.600" />
    <path d="M6.500 8.500h23v20h-23z" fill="#fff" stroke="#777" />
    <path d="M7 9h22v2H7z" fill="#e4e4e4" />
    <path d="m8 25 2-3 2 2 2-5 3 4 2-3 2 2 3-6 2 2 2-4" fill="none" stroke="#7aa3d4" strokeWidth="2" />
    <DownArrow x={26} y={2} />
  </svg>
);

const ContentIcon = () => (
  <svg width="17" height="29" viewBox="0 0 17 29">
    <path d="M1 1.500h15v26H1z" fill="#fff" stroke="#777" />
    <path d="M1.500 2h14v3h-14z" fill="#c9c9c9" />
    <path d="M1.500 5h4v22h-4z" fill="#d8d8d8" />
    <path d="M1 5.500h15M5.500 8.500H16M5.500 11.500H16M5.500 14.500H16M5.500 17.500H16M5.500 20.500H16M5.500 23.500H16M5.500 5v22M11 5v22" stroke="#c4c4c4" fill="none" />
  </svg>
);

const InspectorIcon = ({ id }: { id: string }) => (
  <svg width="30" height="30" viewBox="0 0 30 30">
    <defs>
      <linearGradient id={id} x1="0" y1="0" x2="0" y2="1">
        <stop offset="0" stopColor="#a9b3ce" />
        <stop offset=".5" stopColor="#7180a8" />
        <stop offset="1" stopColor="#a5b2d2" />
      </linearGradient>
    </defs>
    <circle cx="15" cy="15" r="13.500" fill={`url(#${id})`} stroke="#5d6270" strokeWidth="1.300" />
    <circle cx="15" cy="7.500" r="2.300" fill="#fff" />
    <path d="M11.500 12h5.500v9h2v2h-8v-2h2.500v-7h-2z" fill="#fff" />
  </svg>
);

const CrossIcon = () => (
  <svg width="13" height="13" viewBox="0 0 13 13">
    <path d="M6.500 1v4M6.500 8v4M1 6.500h4M8 6.500h4" stroke="#222" strokeWidth="2" />
  </svg>
);
const SlashIcon = () => (
  <svg width="13" height="13" viewBox="0 0 13 13">
    <path d="m2 11 9-9" stroke="#333" strokeWidth="1.800" />
  </svg>
);
const LetterTool = styled.span`
  font: 700 13px/18px 'Open Sans', sans-serif;
`;

const GearIcon = () => (
  <svg width="13" height="13" viewBox="-7 -7 14 14" aria-hidden="true">
    {range(0, 7).map((i) => (
      <rect key={i} x="-1.300" y="-6.500" width="2.600" height="4" fill="currentColor" transform={`rotate(${i * 45})`} />
    ))}
    <circle r="3.200" fill="none" stroke="currentColor" strokeWidth="2.600" />
  </svg>
);
const SmallArrow = () => (
  <svg width="6" height="4" viewBox="0 0 6 4" aria-hidden="true">
    <path d="M0 0h6L3 4z" fill="currentColor" />
  </svg>
);

const ResizeGrip = () => (
  <svg width="14" height="13" viewBox="0 0 14 13" aria-hidden="true">
    <path d="M0 0h14v13H0z" fill="#fff" />
    <path d="M3 12 13 2M7 12l6-6M11 12l2-2" stroke="#888" />
  </svg>
);

/* ---------- windows ---------- */

function Tools({ book }: { book: Book }) {
  const id = `${book.period}-info`;
  return (
    <Toolbar $active={book.active}>
      <ToolGroup $width={83}>
        <Segments role="group" aria-label="Tool Mode">
          <Segment aria-label="Crosshair" aria-pressed="true" $fill={book.active ? 'linear-gradient(#c5e3fb, #74b6ee 50%, #a5dbfb)' : '#cdcdcd'}>
            <CrossIcon />
          </Segment>
          <Segment aria-label="Line">
            <SlashIcon />
          </Segment>
          <Segment>
            <LetterTool>A</LetterTool>
          </Segment>
        </Segments>
        <span>Tool Mode</span>
      </ToolGroup>
      <Divider $before={15} />
      <ToolGroup as="button" $width={32} $before={9}>
        <PrevIcon />
        Prev
      </ToolGroup>
      <ToolGroup as="button" $width={32}>
        <NextIcon />
        Next
      </ToolGroup>
      <ToolGroup $width={62} $before={18}>
        <IconRow>
          <IconButton aria-label="Zoom out">
            <ZoomIcon />
          </IconButton>
          <IconButton aria-label="Zoom in">
            <ZoomIcon plus />
          </IconButton>
        </IconRow>
        <span>Zoom Level</span>
      </ToolGroup>
      <Divider $before={14} />
      <ToolGroup as="button" $width={60} $before={8}>
        <IndicatorsIcon />
        Indicators
      </ToolGroup>
      <ToolGroup as="button" $width={60} $before={5}>
        <TemplatesIcon />
        Templates
      </ToolGroup>
      <Spacer />
      <ToolGroup as="button" $width={50}>
        <LayoutIcon />
        Layout
      </ToolGroup>
      <Divider $before={6} />
      <ToolGroup as="button" $width={48} $before={8}>
        <ContentIcon />
        Content
      </ToolGroup>
      <ToolGroup as="button" $width={52} $before={7}>
        <InspectorIcon id={id} />
        Inspector
      </ToolGroup>
    </Toolbar>
  );
}

const LIGHTS = [
  { name: 'Close', color: '#e8605a', rim: '#9c3a37' },
  { name: 'Minimize', color: '#f0b653', rim: '#a87628' },
  { name: 'Zoom', color: '#7fc75c', rim: '#4b8a38' },
];
const QUOTE_GAPS = [0, 10, 23, 24, 10];

function ChartWindow({ book }: { book: Book }) {
  return (
    <WindowFrame $active={book.active}>
      <TitleBar $active={book.active}>
        <Lights>
          {LIGHTS.map((l) => (
            <Light key={l.name} aria-label={l.name} $color={book.active ? l.color : '#e9e9e9'} $rim={book.active ? l.rim : '#a5a5a5'} />
          ))}
        </Lights>
        <Title>
          <DocIcon dim={!book.active} />
          {book.title}
        </Title>
      </TitleBar>
      <Tools book={book} />
      <WindowBody>
        <Sidebar>
          <SidebarHead>
            <span>Content</span>
          </SidebarHead>
          <ListArea>
            <SymbolList>
              {SYMBOLS.map((s) => (
                <li key={s}>
                  <SymbolRow $state={s !== 'GC/GOLD' ? 'plain' : book.active ? 'active' : 'inactive'}>{s}</SymbolRow>
                </li>
              ))}
            </SymbolList>
            <ScrollTrack>
              <ScrollThumb />
            </ScrollTrack>
          </ListArea>
          <SidebarFoot>
            <GearButton aria-label="Actions" $active={book.active}>
              <GearIcon />
              <SmallArrow />
            </GearButton>
            All
          </SidebarFoot>
        </Sidebar>
        <Main>
          <QuoteBar>
            {book.quote.map((q, i) => (
              <QuoteField key={q} $before={QUOTE_GAPS[i]}>
                {q}
              </QuoteField>
            ))}
          </QuoteBar>
          <div>
            {book.panels.map((p, i) => (
              <Panel key={i} spec={p} book={book} />
            ))}
          </div>
          <TimeAxis>
            <div>
              <TimeRow $stops={book.months.stops}>
                {book.months.names.map((m, i) => (
                  <TimeCell key={i}>{m}</TimeCell>
                ))}
              </TimeRow>
              <TimeRow $stops={book.years.stops}>
                {book.years.names.map((y) => (
                  <TimeCell key={y}>{y}</TimeCell>
                ))}
              </TimeRow>
            </div>
            <PeriodCell>
              <PeriodName $inset={book.period === 'Daily' ? 6 : 0}>{book.period}</PeriodName>
              <MenuButton aria-label="Period menu" />
            </PeriodCell>
          </TimeAxis>
          <BottomStrip>
            <BottomThumb />
            <ResizeGrip />
          </BottomStrip>
        </Main>
      </WindowBody>
    </WindowFrame>
  );
}

export default function App() {
  return (
    <>
      <GlobalStyle />
      <Desktop>
        {BOOKS.map((b) => (
          <ChartWindow key={b.title} book={b} />
        ))}
      </Desktop>
    </>
  );
}
